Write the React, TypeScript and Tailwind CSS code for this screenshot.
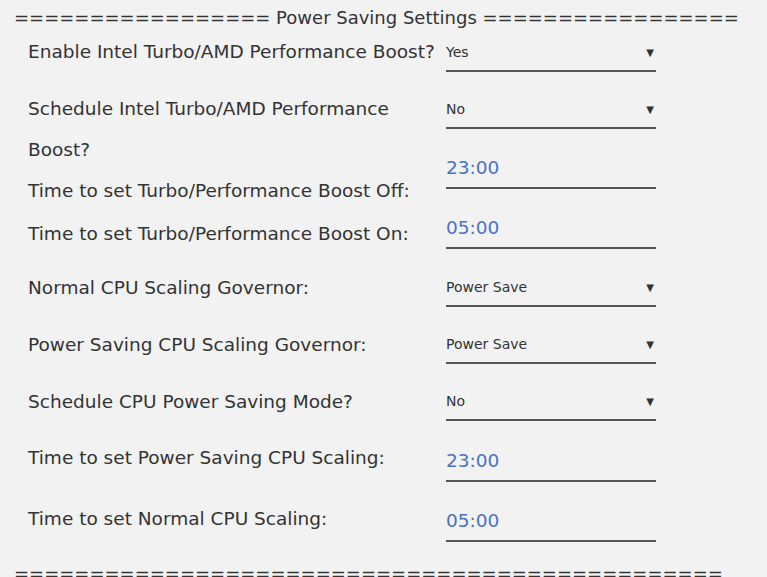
import React from "react";

type Row = {
  label: React.ReactNode;
  kind: "select" | "input";
  value: string;
  h: string;
  lmt: string;
  leading?: string;
};

const rows: Row[] = [
  { label: "Enable Intel Turbo/AMD Performance Boost?", kind: "select", value: "Yes", h: "h-[57px]", lmt: "mt-[12px]" },
  { label: (<>Schedule Intel Turbo/AMD Performance<br />Boost?</>), kind: "select", value: "No", h: "h-[60px]", lmt: "mt-[3px]", leading: "leading-[41px]" },
  { label: "Time to set Turbo/Performance Boost Off:", kind: "input", value: "23:00", h: "h-[60px]", lmt: "mt-[34px]" },
  { label: "Time to set Turbo/Performance Boost On:", kind: "input", value: "05:00", h: "h-[58px]", lmt: "mt-[17px]" },
  { label: "Normal CPU Scaling Governor:", kind: "select", value: "Power Save", h: "h-[57px]", lmt: "mt-[13px]" },
  { label: "Power Saving CPU Scaling Governor:", kind: "select", value: "Power Save", h: "h-[57px]", lmt: "mt-[13px]" },
  { label: "Schedule CPU Power Saving Mode?", kind: "select", value: "No", h: "h-[61px]", lmt: "mt-[13px]" },
  { label: "Time to set Power Saving CPU Scaling:", kind: "input", value: "23:00", h: "h-[60px]", lmt: "mt-[8px]" },
  { label: "Time to set Normal CPU Scaling:", kind: "input", value: "05:00", h: "h-[60px]", lmt: "mt-[9px]" },
];

export default function App() {
  return (
    <div
      className="w-[767px] h-[577px] overflow-hidden bg-[#f2f2f2] text-[#333333] pt-[8px]"
      style={{ fontFamily: '"DejaVu Sans", sans-serif' }}
    >
      <div className="pl-[14px] h-[20px] text-[18px] leading-[20px] whitespace-nowrap">
        ================= Power Saving Settings =================
      </div>
      <div className="pl-[28px]">
        {rows.map((r, i) => (
          <div key={i} className={`flex ${r.h}`}>
            <div className={`w-[418px] shrink-0 text-[18.5px] ${r.leading ?? "leading-[24px]"} ${r.lmt}`}>
              {r.label}
            </div>
            {r.kind === "select" ? (
              <div className="mt-[12px] w-[210px] h-[32px] border-b-2 border-[#555555] flex items-center pb-[6px]">
                <div className="flex w-full items-center justify-between text-[14px] text-[#333333]">
                  <span>{r.value}</span>
                  <span className="text-[10px] pr-[2px]">▼</span>
                </div>
              </div>
            ) : (
              <div className="mt-[12px] w-[210px] h-[32px] border-b-2 border-[#555555] flex items-center pb-[8px]">
                <span className="text-[18.5px] text-[#4a72c4]">{r.value}</span>
              </div>
            )}
          </div>
        ))}
      </div>
      <div className="pl-[14px] text-[18px] leading-[20px] whitespace-nowrap mt-[6px]">
        ===============================================
      </div>
    </div>
  );
}
